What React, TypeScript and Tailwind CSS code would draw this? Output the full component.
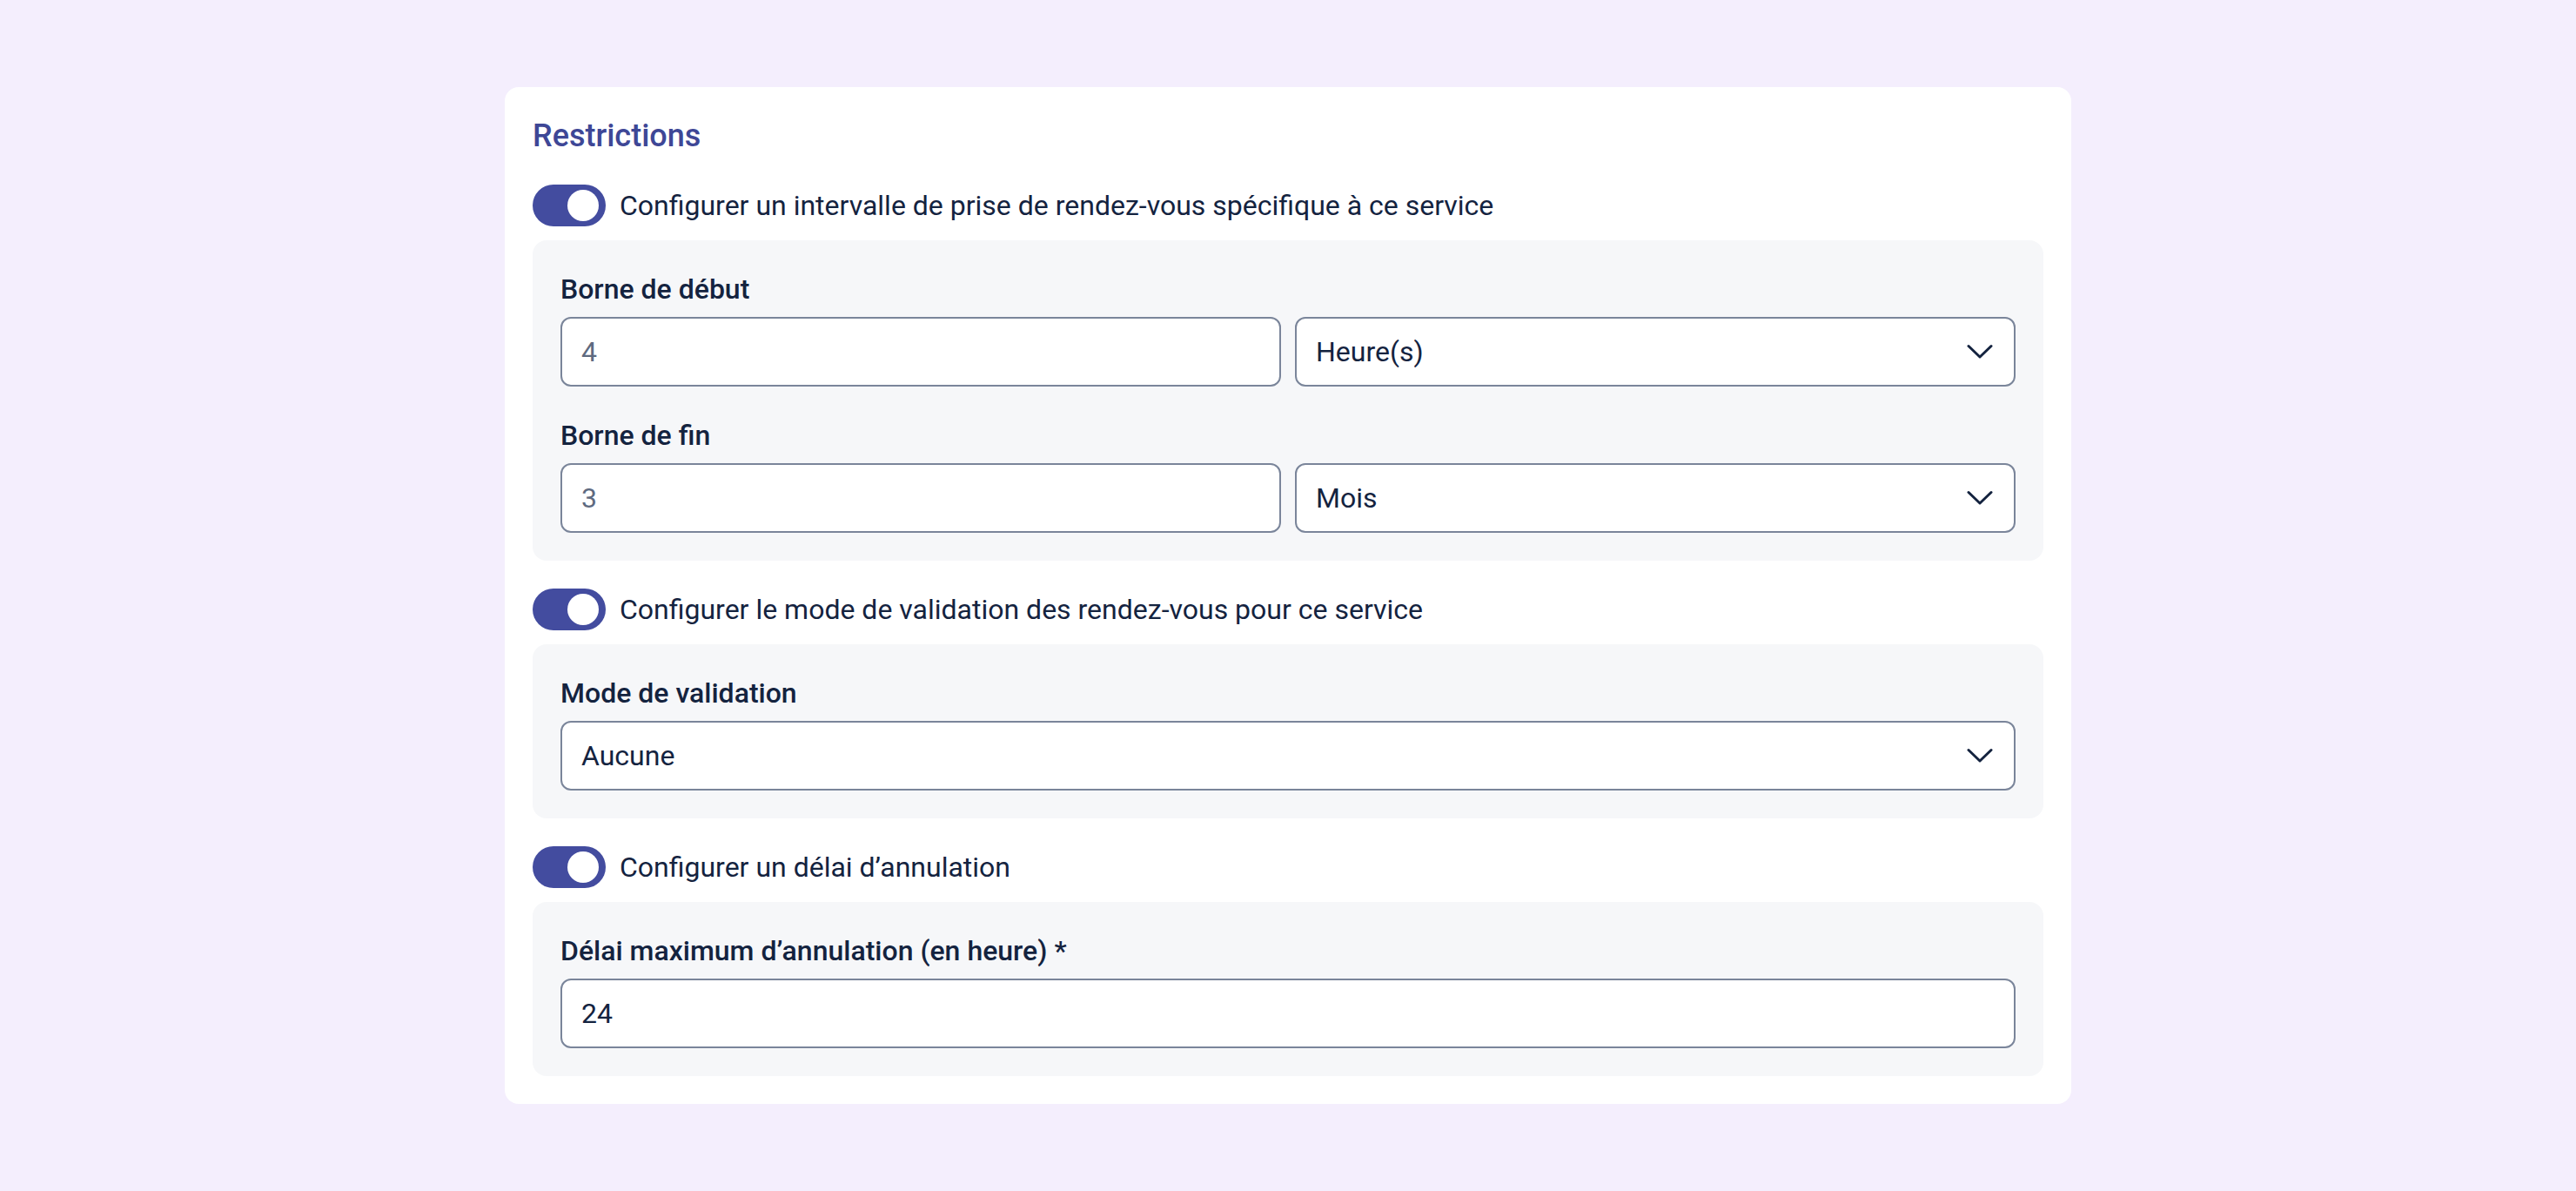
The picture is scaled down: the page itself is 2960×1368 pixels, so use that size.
import React from "react";

const Toggle = () => (
  <div className="w-[84px] h-[48px] rounded-full bg-[#434c9f] flex items-center justify-end pr-[8px] shrink-0">
    <div className="w-[36px] h-[36px] rounded-full bg-white" />
  </div>
);

const Chevron = () => (
  <svg width="30" height="18" viewBox="0 0 30 18" fill="none" className="shrink-0">
    <polyline points="2,2.5 15,15 28,2.5" stroke="#14233f" strokeWidth="3" strokeLinecap="round" strokeLinejoin="round" />
  </svg>
);

const Field = ({ children }: { children: React.ReactNode }) => (
  <div className="h-[80px] border-2 border-[#7a859a] rounded-[12px] bg-white pl-[22px] pr-[24px] flex items-center justify-between text-[32px] leading-[48px]">
    {children}
  </div>
);

const TextInput = ({ value, placeholder }: { value?: string; placeholder?: boolean }) => (
  <Field>
    <span className={placeholder ? "text-[#5e6a80]" : "text-[#14233f]"}>{value}</span>
  </Field>
);

const Select = ({ value }: { value: string }) => (
  <Field>
    <span className="text-[#14233f]">{value}</span>
    <Chevron />
  </Field>
);

const Label = ({ children }: { children: React.ReactNode }) => (
  <div className="text-[32px] leading-[48px] font-medium text-[#14233f] mb-[8px]">{children}</div>
);

const ToggleRow = ({ text }: { text: string }) => (
  <div className="flex items-center gap-[16px]">
    <Toggle />
    <span className="text-[32px] leading-[48px] text-[#14233f]">{text}</span>
  </div>
);

const Panel = ({ children }: { children: React.ReactNode }) => (
  <div className="bg-[#f6f7f9] rounded-[16px] p-[32px] flex flex-col gap-[32px]">{children}</div>
);

export default function App() {
  return (
    <div className="min-h-screen w-full bg-[#f4eefd] flex items-center justify-center" style={{ fontFamily: "Roboto, 'Noto Sans', sans-serif" }}>
      <div className="w-[1800px] bg-white rounded-[16px] p-[32px] flex flex-col">
        <h2 className="text-[36px] leading-[48px] font-medium text-[#3e4796]">Restrictions</h2>
        <div className="mt-[32px] flex flex-col gap-[32px]">
          <div className="flex flex-col gap-[16px]">
            <ToggleRow text="Configurer un intervalle de prise de rendez-vous spécifique à ce service" />
            <Panel>
              <div>
                <Label>Borne de début</Label>
                <div className="grid grid-cols-2 gap-[16px]">
                  <TextInput value="4" placeholder />
                  <Select value="Heure(s)" />
                </div>
              </div>
              <div>
                <Label>Borne de fin</Label>
                <div className="grid grid-cols-2 gap-[16px]">
                  <TextInput value="3" placeholder />
                  <Select value="Mois" />
                </div>
              </div>
            </Panel>
          </div>
          <div className="flex flex-col gap-[16px]">
            <ToggleRow text="Configurer le mode de validation des rendez-vous pour ce service" />
            <Panel>
              <div>
                <Label>Mode de validation</Label>
                <Select value="Aucune" />
              </div>
            </Panel>
          </div>
          <div className="flex flex-col gap-[16px]">
            <ToggleRow text="Configurer un délai d’annulation" />
            <Panel>
              <div>
                <Label>Délai maximum d’annulation (en heure) *</Label>
                <TextInput value="24" />
              </div>
            </Panel>
          </div>
        </div>
      </div>
    </div>
  );
}
